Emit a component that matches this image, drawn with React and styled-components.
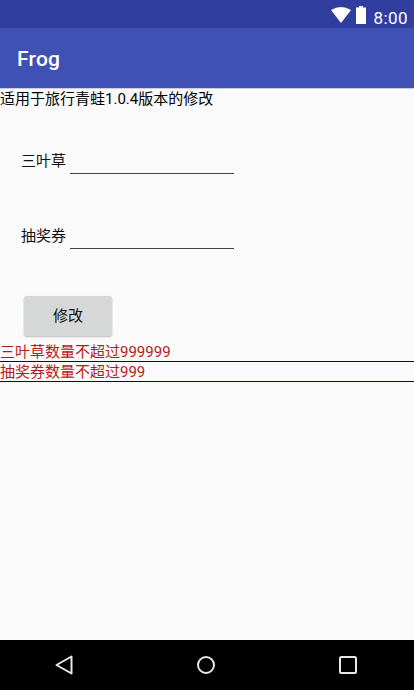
import React from "react";
import styled, { createGlobalStyle } from "styled-components";

const Global = createGlobalStyle`
  html, body { margin: 0; padding: 0; background: #fafafa; }
  * { box-sizing: border-box; }
`;
const Phone = styled.div`
  width: 414px; height: 690px; display: flex; flex-direction: column;
  background: #fafafa; overflow: hidden;
  font-family: Roboto, "Noto Sans CJK SC", sans-serif;
`;
const StatusBar = styled.div`
  height: 28px; background: #303f9f; display: flex; align-items: center;
  justify-content: flex-end; flex: none; padding-right: 6px;
`;
const StatusIcon = styled.svg`
  margin: 0 0 0 ${p => p.$gap}px; flex: none;
`;
const Clock = styled.span`
  font: 400 17px Roboto, sans-serif; color: #fff; margin: 7px 0 0 8px; letter-spacing: 0.4px;
`;
const AppBar = styled.div`
  height: 61px; flex: none; background: #3f51b5; display: flex; align-items: center;
  padding: 2px 0 0 17px; color: #fff; font: 500 21px Roboto, sans-serif; letter-spacing: 0.25px;
  border-bottom: 1px solid #c9cde0;
`;
const Content = styled.div`
  flex: 1; display: flex; flex-direction: column; min-height: 0;
`;
const Intro = styled.div`
  font-size: 15px; line-height: 20px; color: #000; white-space: nowrap;
`;
const Row = styled.div`
  display: flex; align-items: flex-end; padding-left: 21px; height: 26px;
  margin-top: ${p => p.$top}px;
`;
const Label = styled.span`
  font-size: 15px; line-height: 24px; color: #111; width: 49px; flex: none; padding-bottom: 1px;
`;
const Field = styled.div`
  width: 164px; height: 26px; border-bottom: 1px solid #444;
`;
const Button = styled.button`
  width: 88px; height: 40px; margin: 47px 0 0 24px; border: none; border-radius: 3px;
  background: #d6d7d7; box-shadow: 0 1px 2px rgba(0,0,0,.25); color: #111;
  font-family: inherit; font-size: 15px; padding: 0 0 3px;
`;
const Notes = styled.div`
  margin-top: 6px; display: flex; flex-direction: column;
`;
const Note = styled.div`
  height: 20px; font-size: 15px; line-height: 20px; color: #b71c1c; white-space: nowrap;
  border-bottom: 1px solid #000080;
`;
const NavBar = styled.div`
  height: 50px; flex: none; background: #000; display: flex; align-items: center;
  justify-content: space-between; padding: 0 57px 0 55px;
`;

export default function App() {
  return (
    <Phone>
      <Global />
      <StatusBar>
        <StatusIcon $gap={0} width="20" height="20" viewBox="0 0 20 20"><path d="M0 6 Q10 0 20 6 L10 19 Z" fill="#fff" /></StatusIcon>
        <StatusIcon $gap={5} width="10" height="20" viewBox="0 0 10 20"><path d="M3 2h4v1.5h3V20H0V3.5h3z" fill="#fff" /></StatusIcon>
        <Clock>8:00</Clock>
      </StatusBar>
      <AppBar>Frog</AppBar>
      <Content>
        <Intro>适用于旅行青蛙1.0.4版本的修改</Intro>
        <Row $top={39}><Label>三叶草</Label><Field /></Row>
        <Row $top={49}><Label>抽奖券</Label><Field /></Row>
        <Button>修改</Button>
        <Notes>
          <Note>三叶草数量不超过999999</Note>
          <Note>抽奖券数量不超过999</Note>
        </Notes>
      </Content>
      <NavBar>
        <svg width="18" height="20" viewBox="0 0 18 20"><path d="M16.5 1.5 V18.5 L1.5 10 Z" fill="none" stroke="#e8e8e8" strokeWidth="2" strokeLinejoin="round" /></svg>
        <svg width="18" height="18" viewBox="0 0 18 18"><circle cx="9" cy="9" r="8" fill="none" stroke="#e8e8e8" strokeWidth="2" /></svg>
        <svg width="18" height="18" viewBox="0 0 18 18"><rect x="1" y="1" width="16" height="16" rx="1.5" fill="none" stroke="#e8e8e8" strokeWidth="2" /></svg>
      </NavBar>
    </Phone>
  );
}
